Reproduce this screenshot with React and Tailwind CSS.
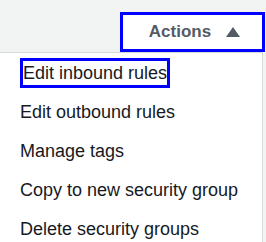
const items = [
  'Edit inbound rules',
  'Edit outbound rules',
  'Manage tags',
  'Copy to new security group',
  'Delete security groups',
];

export default function App() {
  return (
    <div className="w-[266px] h-[242px] bg-[#f2f3f3] overflow-hidden flex flex-col font-['Liberation_Sans',Arial,sans-serif]">
      {/* Header */}
      <div className="h-[52px] flex items-end justify-end pr-px pt-3">
        <button className="w-[145px] h-[40px] bg-white border-[3px] border-[#0000ff] flex items-center justify-center gap-[15px] pl-[4px] text-[17px] font-bold text-[#545b64]">
          Actions
          <svg width="14" height="10" viewBox="0 0 14 10" className="mt-[-1px]">
            <path d="M7 0 L14 10 L0 10 Z" fill="#545b64" />
          </svg>
        </button>
      </div>

      {/* Menu */}
      <div className="flex-1 w-[263px] bg-white border-t border-r border-[#d5dbdb]">
        {items.map((item, i) => (
          <div key={i} className="h-[39px] flex items-center pl-5 text-[18px] text-[#16191f]">
            {i === 0 ? (
              <span className="border-[3px] border-[#0000ff] leading-[24px]">{item}</span>
            ) : (
              <span className="leading-[24px]">{item}</span>
            )}
          </div>
        ))}
      </div>
    </div>
  );
}
